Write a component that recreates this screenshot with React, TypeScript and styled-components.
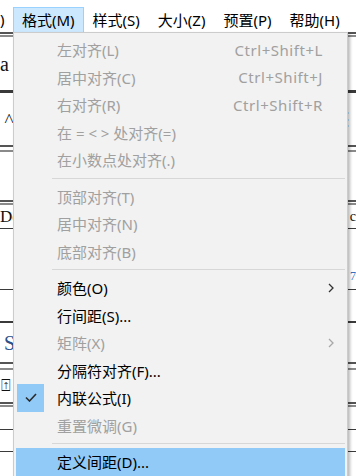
import React from "react";
import styled, { createGlobalStyle } from "styled-components";

const GlobalStyle = createGlobalStyle`
  html, body {
    margin: 0;
    padding: 0;
    background: #ffffff;
  }
  body {
    width: 356px;
    height: 476px;
    overflow: hidden;
    font-family: "Noto Sans", "Noto Sans CJK SC", sans-serif;
  }
`;

const Screen = styled.div`
  position: relative;
  width: 356px;
  height: 476px;
  overflow: hidden;
  background: #ffffff;
`;

/* ---------- menu bar ---------- */

const MenuBar = styled.div`
  display: flex;
  align-items: stretch;
  height: 32px;
  padding-top: 7px;
  box-sizing: border-box;
  font-size: 15px;
  color: #000;
`;

const EdgeTitle = styled.div`
  width: 13px;
  display: flex;
  align-items: center;
  padding-bottom: 1px;
  flex-shrink: 0;
`;

const MenuTitle = styled.div<{ $open?: boolean }>`
  display: flex;
  align-items: center;
  padding: 0 8px 1px 8px;
  white-space: nowrap;
  flex-shrink: 0;
  border: 1px solid ${(p) => (p.$open ? "#99d1ff" : "transparent")};
  border-bottom: none;
  background: ${(p) => (p.$open ? "#cce8ff" : "transparent")};
`;

/* ---------- document behind the menu ---------- */

const Backdrop = styled.div`
  display: flex;
  flex-direction: column;
  font-family: "Liberation Serif", serif;
`;

const Rule = styled.div<{ $top: number; $gap: number; $bottom: number }>`
  height: ${(p) => p.$gap}px;
  border-top: ${(p) => p.$top}px solid #555;
  border-bottom: ${(p) => p.$bottom}px solid #8a8a8a;
`;

const Band = styled.div<{ $h: number; $line?: number }>`
  height: ${(p) => p.$h}px;
  display: flex;
  align-items: center;
  justify-content: space-between;
  border-bottom: ${(p) => (p.$line ? `${p.$line}px solid #3a3a3a` : "none")};
  box-sizing: border-box;
  font-size: 22px;
  color: #111;
`;

const Glyph = styled.span<{ $shift?: number; $size?: number; $color?: string }>`
  margin-left: ${(p) => p.$shift ?? 0}px;
  font-size: ${(p) => p.$size ?? 20}px;
  color: ${(p) => p.$color ?? "#111"};
  line-height: 1;
`;

/* ---------- drop-down ---------- */

const Dropdown = styled.div`
  position: absolute;
  left: 13px;
  top: 32px;
  width: 335px;
  height: 470px;
  box-sizing: border-box;
  background: #f2f2f2;
  border: 1px solid #cccccc;
  box-shadow: 2px 2px 3px rgba(0, 0, 0, 0.28);
  padding: 3px 2px 0 2px;
  font-family: "Noto Sans", "Noto Sans CJK SC", sans-serif;
  font-size: 15px;
`;

const Item = styled.div<{ $disabled?: boolean; $active?: boolean }>`
  display: grid;
  grid-template-columns: 28px 1fr auto 22px;
  align-items: center;
  height: 27.5px;
  color: ${(p) => (p.$disabled ? "#a0a0a0" : "#000")};
  background: ${(p) => (p.$active ? "#91c9f7" : "transparent")};
  white-space: nowrap;
`;

const CheckSlot = styled.div<{ $on?: boolean }>`
  height: 100%;
  margin-left: 1px;
  display: flex;
  align-items: center;
  justify-content: center;
  background: ${(p) => (p.$on ? "#91c9f7" : "transparent")};
`;

const Label = styled.span`
  padding-left: 13px;
`;

const Shortcut = styled.span`
  text-align: right;
  letter-spacing: 0.55px;
`;

const ArrowSlot = styled.div`
  display: flex;
  align-items: center;
  padding-left: 5px;
`;

const Separator = styled.div`
  height: 9px;
  display: flex;
  align-items: center;
  padding-left: 36px;
  &::after {
    content: "";
    flex: 1;
    height: 1px;
    background: #d7d7d7;
  }
`;

type Entry =
  | { sep: true }
  | {
      sep?: false;
      label: string;
      shortcut?: string;
      disabled?: boolean;
      sub?: boolean;
      checked?: boolean;
      active?: boolean;
    };

const entries: Entry[] = [
  { label: "左对齐(L)", shortcut: "Ctrl+Shift+L", disabled: true },
  { label: "居中对齐(C)", shortcut: "Ctrl+Shift+J", disabled: true },
  { label: "右对齐(R)", shortcut: "Ctrl+Shift+R", disabled: true },
  { label: "在 = < > 处对齐(=)", disabled: true },
  { label: "在小数点处对齐(.)", disabled: true },
  { sep: true },
  { label: "顶部对齐(T)", disabled: true },
  { label: "居中对齐(N)", disabled: true },
  { label: "底部对齐(B)", disabled: true },
  { sep: true },
  { label: "颜色(O)", sub: true },
  { label: "行间距(S)..." },
  { label: "矩阵(X)", sub: true, disabled: true },
  { label: "分隔符对齐(F)..." },
  { label: "内联公式(I)", checked: true },
  { label: "重置微调(G)", disabled: true },
  { sep: true },
  { label: "定义间距(D)...", active: true },
];

const Check = () => (
  <svg width="12" height="9" viewBox="0 0 12 9">
    <polyline points="1,4.5 4.5,8 11,1" fill="none" stroke="#2b2b2b" strokeWidth="1.6" />
  </svg>
);

const Chevron = ({ color }: { color: string }) => (
  <svg width="6" height="10" viewBox="0 0 6 10">
    <polyline points="1,1 5,5 1,9" fill="none" stroke={color} strokeWidth="1.3" />
  </svg>
);

const App: React.FC = () => {
  return (
    <Screen>
      <GlobalStyle />
      <MenuBar>
        <EdgeTitle>)</EdgeTitle>
        <MenuTitle $open>格式(M)</MenuTitle>
        <MenuTitle>样式(S)</MenuTitle>
        <MenuTitle>大小(Z)</MenuTitle>
        <MenuTitle>预置(P)</MenuTitle>
        <MenuTitle>帮助(H)</MenuTitle>
      </MenuBar>

      <Backdrop>
        <Rule $top={2} $gap={1} $bottom={2} />
        <Band $h={56} $line={3}>
          <Glyph $shift={0} $size={20}>a</Glyph>
        </Band>
        <Band $h={52}>
          <Glyph $shift={4} $size={18}>˄</Glyph>
          <Glyph $size={18}>⋮</Glyph>
        </Band>
        <Rule $top={2} $gap={3} $bottom={2} />
        <Band $h={48} />
        <Rule $top={2} $gap={1} $bottom={2} />
        <Band $h={24} $line={1}>
          <Glyph $size={17}>De</Glyph>
          <Glyph $size={14}>c</Glyph>
        </Band>
        <Band $h={33} />
        <Band $h={28} $line={1}>
          <span />
          <Glyph $size={12} $color="#3a6fc0">7</Glyph>
        </Band>
        <Band $h={33} $line={2} />
        <Band $h={39}>
          <Glyph $shift={4} $size={20} $color="#2a4f8a">S</Glyph>
        </Band>
        <Rule $top={2} $gap={4} $bottom={2} />
        <Band $h={32}>
          <Glyph $shift={1} $size={16}>⍐</Glyph>
        </Band>
        <Rule $top={2} $gap={1} $bottom={2} />
        <Band $h={23} $line={1} />
        <Band $h={22} $line={1} />
      </Backdrop>

      <Dropdown>
        {entries.map((e, i) =>
          e.sep ? (
            <Separator key={i} />
          ) : (
            <Item key={i} $disabled={e.disabled} $active={e.active}>
              <CheckSlot $on={e.checked}>{e.checked && <Check />}</CheckSlot>
              <Label>{e.label}</Label>
              <Shortcut>{e.shortcut}</Shortcut>
              <ArrowSlot>
                {e.sub && <Chevron color={e.disabled ? "#a8a8a8" : "#333"} />}
              </ArrowSlot>
            </Item>
          )
        )}
      </Dropdown>
    </Screen>
  );
};

export default App;
